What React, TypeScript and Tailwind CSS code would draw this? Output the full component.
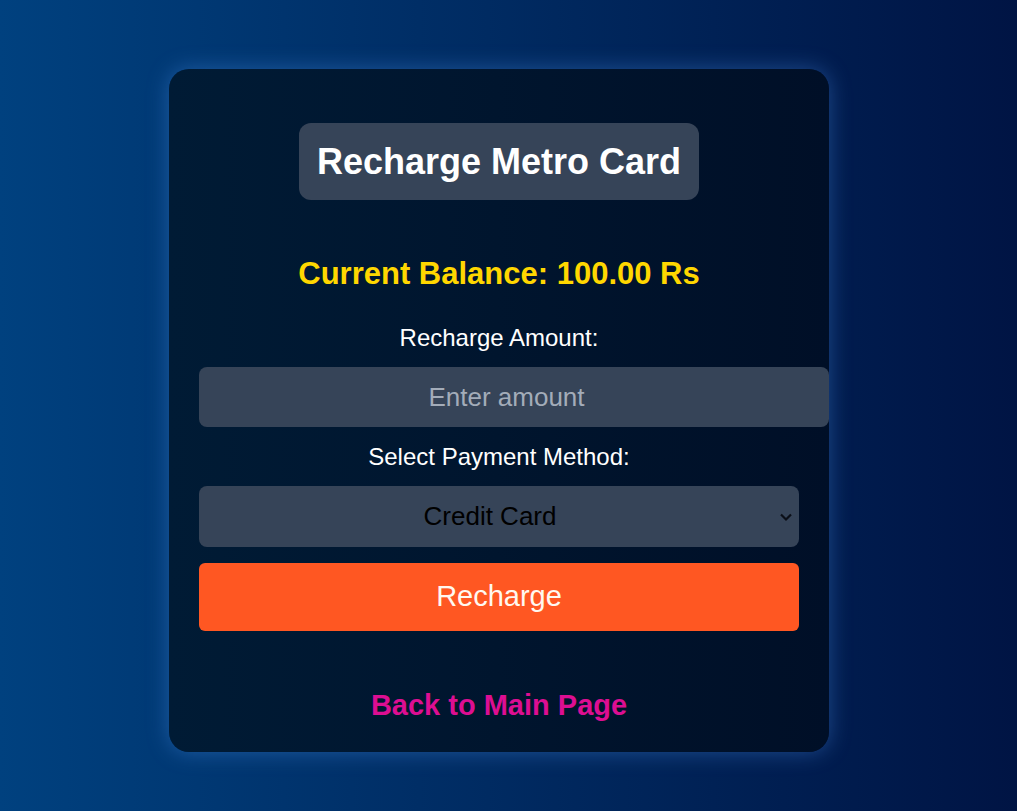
import React from 'react';

const App: React.FC = () => {
  return (
    <div className="min-h-screen w-full bg-gradient-to-r from-[#00417f] to-[#001444] font-['Liberation_Sans',Arial,sans-serif]">
      <div className="flex justify-center pt-[69px] pr-[19px]">
        {/* Card */}
        <div className="w-[660px] rounded-[20px] bg-gradient-to-r from-[#001b35] to-[#000f27] px-[30px] pt-[54px] pb-[30px] shadow-[0_0_22px_rgba(90,160,255,0.35)]">
          <div className="flex justify-center">
            <h1 className="flex h-[77px] items-center rounded-[12px] bg-[#364458] px-[18px] text-[36px] font-bold leading-none text-white">
              Recharge Metro Card
            </h1>
          </div>

          <h2 className="mt-[56px] text-center text-[31px] font-bold leading-[36px] text-[#ffd700]">
            Current Balance: 100.00 Rs
          </h2>

          <form className="flex flex-col items-start" onSubmit={(e) => e.preventDefault()}>
            <label className="mt-[32px] block w-[600px] text-center text-[24px] leading-[28px] text-white">
              Recharge Amount:
            </label>
            <input
              type="number"
              placeholder="Enter amount"
              className="mt-[15px] h-[60px] w-[630px] rounded-lg bg-[#364458] px-[15px] text-center text-[26px] text-white outline-none placeholder:text-[#a3acb9]"
            />

            <label className="mt-[16px] block w-[600px] text-center text-[24px] leading-[28px] text-white">
              Select Payment Method:
            </label>
            <div className="relative mt-[15px] w-[600px]">
              <select className="h-[61px] w-full appearance-none rounded-lg bg-[#364458] pr-[18px] text-center text-[26px] text-black outline-none">
                <option>Credit Card</option>
                <option>Debit Card</option>
                <option>UPI</option>
                <option>Net Banking</option>
              </select>
              <svg
                className="pointer-events-none absolute right-[6px] top-[26px] h-[10px] w-[14px]"
                viewBox="0 0 14 10"
                fill="none"
                stroke="#0b0f18"
                strokeWidth="2.2"
              >
                <path d="M2 2.5 7 7.5l5-5" />
              </svg>
            </div>

            <button
              type="submit"
              className="mt-[16px] h-[68px] w-[600px] rounded-md bg-[#ff5722] text-[29px] text-[#fff8f0]"
            >
              Recharge
            </button>
          </form>

          <a href="#" className="mt-[58px] block w-[600px] text-center text-[29px] font-bold leading-[33px] text-[#dd0e92]">
            Back to Main Page
          </a>
        </div>
      </div>
    </div>
  );
};

export default App;
